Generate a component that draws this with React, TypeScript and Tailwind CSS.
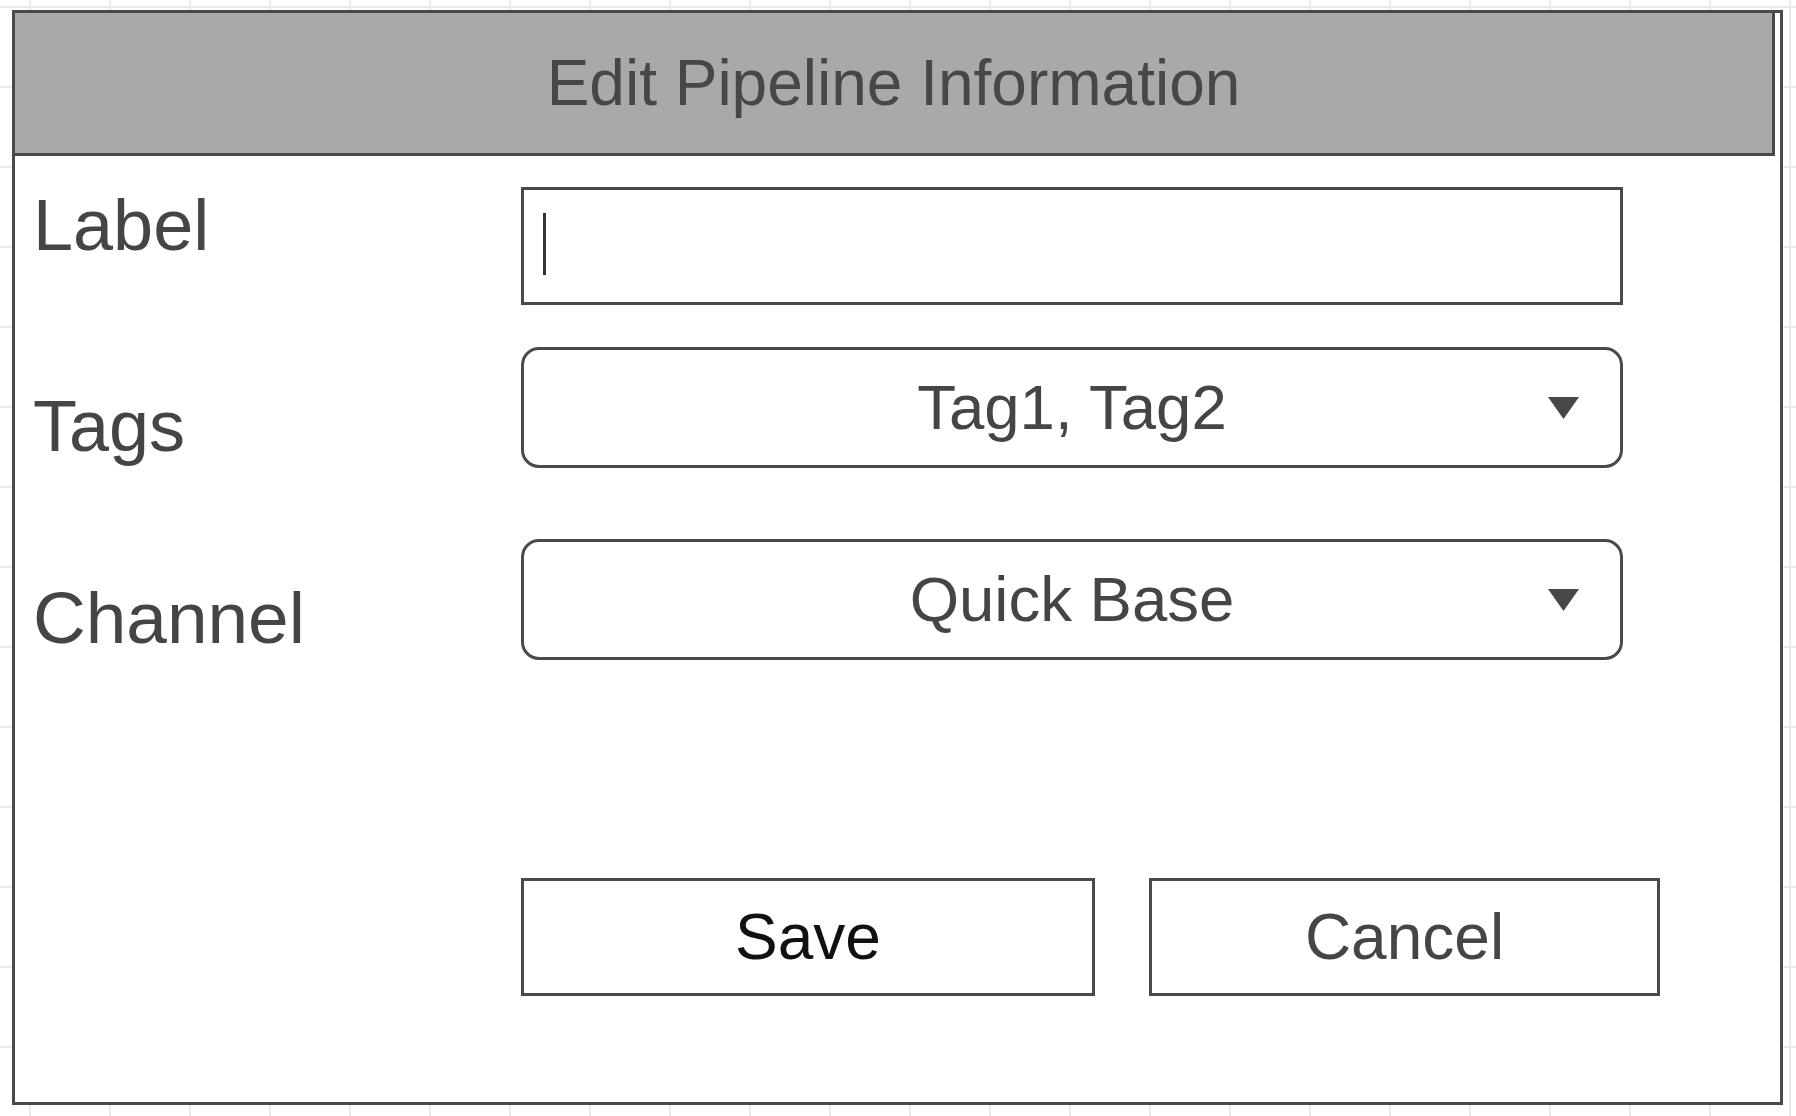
import React from "react";

const font = "font-['Liberation_Sans',Arial,sans-serif]";

function Arrow() {
  return (
    <svg width="31" height="22" viewBox="0 0 31 22" className="absolute right-[41px]">
      <polygon points="0,0 31,0 15.5,22" fill="#474747" />
    </svg>
  );
}

function Select({ value }: { value: string }) {
  return (
    <div className="relative w-[1102px] h-[121px] border-[3px] border-[#4a4a4a] rounded-[18px] bg-white flex items-center justify-center">
      <span className="text-[63.5px] leading-none text-[#454545]">{value}</span>
      <Arrow />
    </div>
  );
}

export default function App() {
  return (
    <div
      className={`${font} w-[1796px] h-[1116px] overflow-hidden bg-white bg-[linear-gradient(to_right,#e9e9e9_2px,transparent_2px),linear-gradient(to_bottom,#e9e9e9_2px,transparent_2px)] bg-[size:80px_80px] bg-[position:29px_6px] pt-[10px] pl-[12px]`}>
      <div className="w-[1771px] h-[1095px] border-[3px] border-[#4a4a4a] bg-white flex flex-col">
        {/* header */}
        <div className="-mt-[3px] -ml-[3px] mr-[5px] h-[146px] shrink-0 border-[3px] border-[#4a4a4a] bg-[#a9a9a9] flex items-center justify-center">
          <span className="text-[64px] leading-none text-[#474747]">Edit Pipeline Information</span>
        </div>

        {/* Label */}
        <div className="flex items-start mt-[31px]">
          <div className="w-[506px] pl-[18px] mt-[2px] text-[72px] leading-none text-[#454545]">Label</div>
          <div className="w-[1102px] h-[118px] border-[3px] border-[#4a4a4a] bg-white flex items-center pl-[19px]">
            <span className="w-[3px] h-[62px] bg-[#333] -mt-[4px]"></span>
          </div>
        </div>

        {/* Tags */}
        <div className="flex items-start mt-[42px]">
          <div className="w-[506px] pl-[18px] mt-[43px] text-[72px] leading-none text-[#454545]">Tags</div>
          <Select value="Tag1, Tag2" />
        </div>

        {/* Channel */}
        <div className="flex items-start mt-[71px]">
          <div className="w-[506px] pl-[18px] mt-[42px] text-[73px] leading-none text-[#454545]">Channel</div>
          <Select value="Quick Base" />
        </div>

        {/* actions */}
        <div className="flex items-start mt-[218px] pl-[506px] gap-[54px]">
          <button className="w-[574px] h-[118px] border-[3px] border-[#4a4a4a] bg-white text-[64px] leading-none text-[#111]">
            Save
          </button>
          <button className="w-[511px] h-[118px] border-[3px] border-[#4a4a4a] bg-white text-[64px] leading-none text-[#454545]">
            Cancel
          </button>
        </div>
      </div>
    </div>
  );
}
